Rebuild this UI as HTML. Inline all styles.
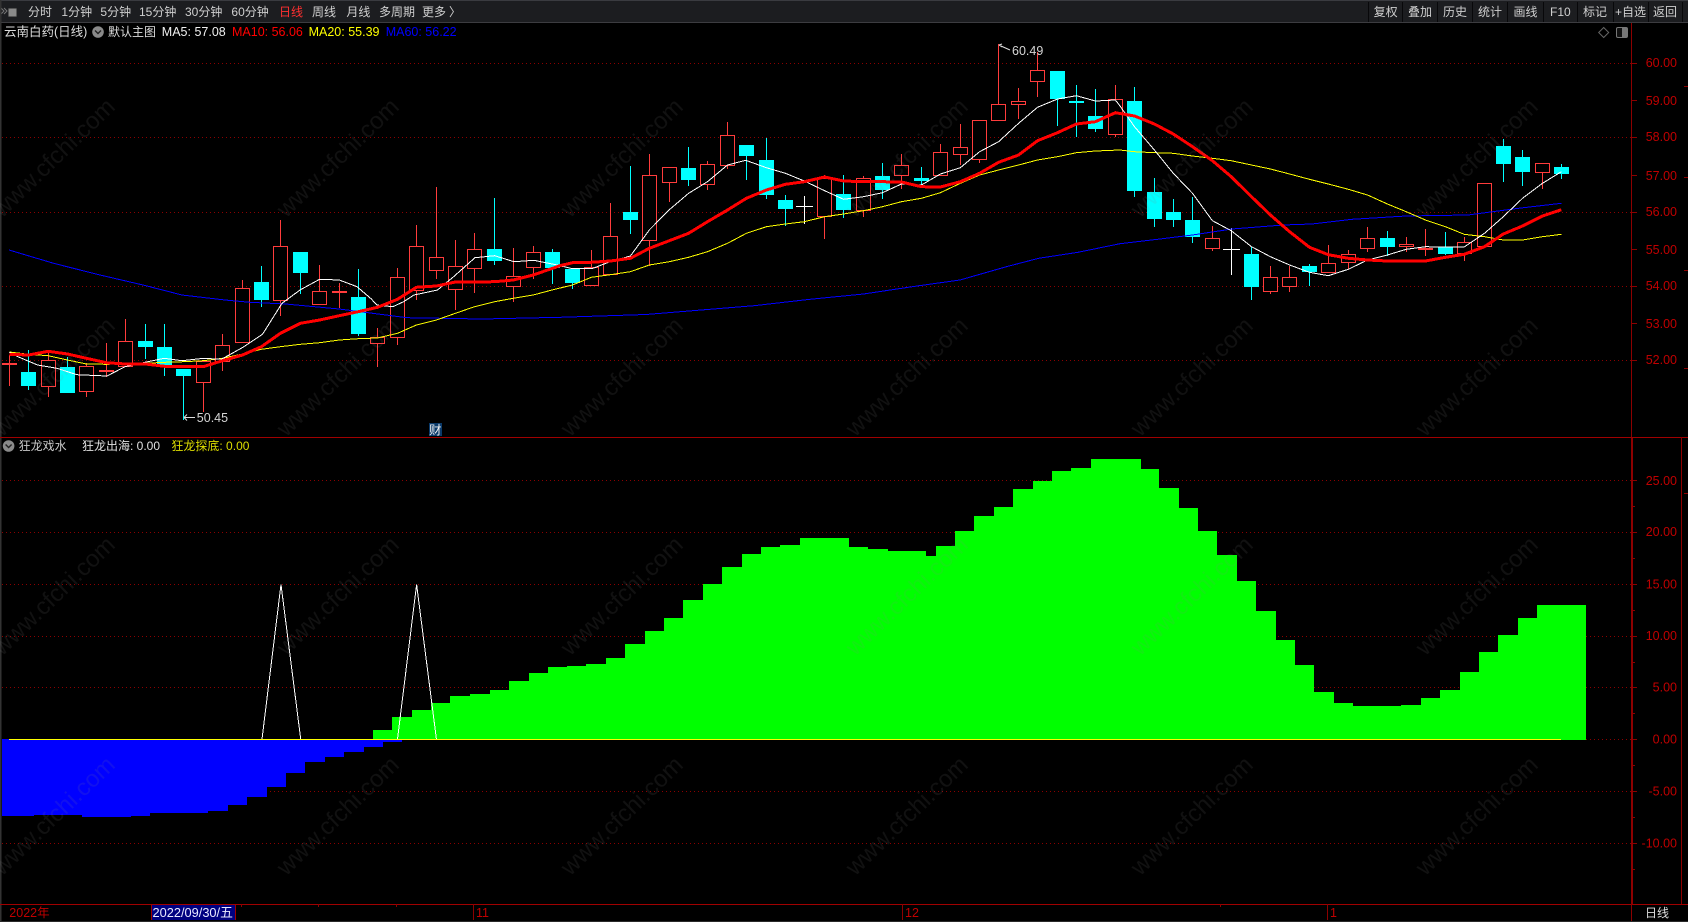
<!DOCTYPE html>
<html><head><meta charset="utf-8"><title>云南白药</title>
<style>
html,body{margin:0;padding:0;background:#000;width:1688px;height:922px;overflow:hidden}
svg{display:block;position:absolute;left:0;top:0}
text{font-family:"Liberation Sans","Noto Sans CJK SC",sans-serif;dominant-baseline:auto}
.t{font-size:12px;fill:#cfcfcf}
.a{font-size:12.5px;fill:#c00000;text-anchor:end}
.l{font-size:12.5px}
.wm{font-size:24px;fill:#808080;fill-opacity:.13;text-anchor:middle}
</style></head><body>
<svg width="1688" height="922" viewBox="0 0 1688 922" xmlns="http://www.w3.org/2000/svg">
<rect width="1688" height="922" fill="#000"/>
<!-- toolbar -->
<rect width="1688" height="22" fill="#1c1d20"/>
<rect width="1688" height="1" fill="#3a3b40"/>
<rect y="22" width="1688" height="1" fill="#3c3c40"/>
<path d="M1368.5 2V22M1402.5 2V22M1437.5 2V22M1472.5 2V22M1507.5 2V22M1543.5 2V22M1577.5 2V22M1613.5 2V22M1648.5 2V22M1682.5 2V22" stroke="#08080a" fill="none"/>
<g fill="none" stroke="#8a8a8a">
<rect x="8.5" y="8.5" width="8" height="8" rx="1" fill="#8a8a8a" stroke="#555"/>
<path d="M1 8l3 3-3 3M4 8l3 3-3 3" stroke="#777"/>
</g>
<g class="t">
<text class="t" x="28" y="16">分时</text>
<text class="t" x="61.4" y="16">1分钟</text>
<text class="t" x="100.4" y="16">5分钟</text>
<text class="t" x="139" y="16">15分钟</text>
<text class="t" x="185" y="16">30分钟</text>
<text class="t" x="231.4" y="16">60分钟</text>
<text class="t" x="279" y="16" style="fill:#ff3030">日线</text>
<text class="t" x="312" y="16">周线</text>
<text class="t" x="346.4" y="16">月线</text>
<text class="t" x="379" y="16">多周期</text>
<text class="t" x="422" y="16">更多</text>
<text class="t" x="449" y="16">〉</text>
<text class="t" x="1373.6" y="16">复权</text>
<text class="t" x="1408" y="16">叠加</text>
<text class="t" x="1443" y="16">历史</text>
<text class="t" x="1478" y="16">统计</text>
<text class="t" x="1513.5" y="16">画线</text>
<text class="t" x="1550" y="16">F10</text>
<text class="t" x="1583" y="16">标记</text>
<text class="t" x="1615" y="16">+自选</text>
<text class="t" x="1653" y="16">返回</text>
</g>
<rect x="0" y="0" width="1.5" height="922" fill="#333"/>

<!-- grid -->
<path d="M2 63.5H1631M2 137.5H1631M2 212.5H1631M2 286.5H1631M2 360.5H1631M2 480.5H1631M2 532.5H1631M2 584.5H1631M2 636.5H1631M2 687.5H1631M2 739.5H1631M2 791.5H1631M2 843.5H1631" stroke="#8c0000" stroke-dasharray="1 3" fill="none"/>

<!-- lower histogram -->
<path d="M2 739V816H34V815H82V817H131V816H150V813H208V811H228V805H247V797H267V787H286V773H305V762H325V757H344V752H364V747H383V742H402V739Z" fill="#0000ff"/>
<path d="M373 739V730H392V717H412V710H431V703H450V696H470V694H490V690H509V681H529V673H548V667H567V666H586V664H606V658H625V644H645V631H664V618H683V600H703V584H722V567H742V554H761V547H780V545H800V538H849V547H868V549H888V551H926V556H936V546H955V531H974V516H994V507H1013V489H1033V481H1052V471H1071V468H1091V459H1141V469H1159V488H1179V508H1198V531H1217V555H1237V581H1256V611H1276V640H1295V665H1314V692H1334V703H1353V706H1401V705H1421V698H1440V690H1460V672H1479V652H1498V635H1518V618H1537V605H1586V740H373Z" fill="#00ff00"/>
<path d="M262 739L281 584.5L300.7 739M397.5 739L416.6 584.5L436.4 739" fill="none" stroke="#fff" stroke-width="1" shape-rendering="crispEdges"/>
<path d="M9 739.5H1561" stroke="#ffff00" stroke-width="1" fill="none" shape-rendering="crispEdges"/>

<!-- candle wicks -->
<g shape-rendering="crispEdges">
<path fill="none" stroke="#ff3c3c" d="M9.5 355V386M48.5 351V397M86.5 363V397M106.5 343V377M125.5 319V367M203.5 361V412M222.5 334V371M242.5 280V343M280.5 220V316M319.5 265V305M339.5 283V308M377.5 328V367M397.5 268V345M416.5 225V300M436.5 187V279M455.5 240V310M474.5 233V293M513.5 248V302M533.5 246V279M591.5 250V286M610.5 203V275M649.5 154V266M669.5 167V202M707.5 161V190M727.5 122V169M824.5 175V239M863.5 176V217M901.5 154V189M940.5 144V176M960.5 124V165M979.5 120V163M998.5 44V121M1018.5 88V119M1037.5 52V97M1115.5 85V137M1212.5 226V251M1270.5 266V294M1289.5 266V292M1328.5 245V273M1348.5 250V269M1367.5 227V252M1406.5 237V252M1425.5 229V256M1464.5 237V261M1484.5 183V247M1542.5 163V189"/>
<path fill="none" stroke="#00ffff" d="M28.5 350V390M67.5 357V393M145.5 324V359M164.5 324V376M183.5 369V420M261.5 266V307M300.5 252V294M358.5 269V336M494.5 198V265M552.5 249V284M572.5 269V289M630.5 166V234M688.5 147V186M746.5 145V180M766.5 138V199M785.5 195V226M843.5 175V218M882.5 163V199M921.5 167V187M1057.5 71V126M1076.5 85V137M1095.5 89V132M1134.5 87V197M1154.5 178V227M1173.5 199V227M1192.5 197V243M1251.5 247V300M1309.5 264V286M1387.5 231V256M1445.5 232V255M1503.5 139V182M1522.5 150V186M1561.5 164V179"/>
<path fill="none" stroke="#fff" d="M804.5 196V224M796 206.5H813M1231.5 228V275M1223 249.5H1240"/>
<!-- red bodies -->
<path fill="#000" stroke="#ff3c3c" d="M41.5 360.5h14V386.5h-14zM79.5 366.5h14V391.5h-14zM99.5 370.5h14V371.5h-14zM118.5 341.5h14V366.5h-14zM196.5 361.5h14V382.5h-14zM215.5 345.5h14V361.5h-14zM235.5 288.5h14V342.5h-14zM273.5 246.5h14V300.5h-14zM312.5 291.5h14V304.5h-14zM370.5 337.5h14V343.5h-14zM390.5 277.5h14V337.5h-14zM409.5 246.5h14V290.5h-14zM429.5 257.5h14V270.5h-14zM448.5 266.5h14V289.5h-14zM467.5 249.5h14V268.5h-14zM506.5 276.5h14V286.5h-14zM526.5 252.5h14V267.5h-14zM584.5 267.5h14V285.5h-14zM603.5 236.5h14V274.5h-14zM642.5 175.5h14V240.5h-14zM662.5 167.5h14V182.5h-14zM700.5 164.5h14V184.5h-14zM720.5 135.5h14V165.5h-14zM817.5 178.5h14V216.5h-14zM856.5 178.5h14V210.5h-14zM894.5 165.5h14V175.5h-14zM933.5 152.5h14V175.5h-14zM953.5 147.5h14V154.5h-14zM972.5 120.5h14V159.5h-14zM991.5 104.5h14V120.5h-14zM1011.5 101.5h14V104.5h-14zM1030.5 70.5h14V81.5h-14zM1108.5 99.5h14V134.5h-14zM1205.5 238.5h14V248.5h-14zM1263.5 277.5h14V291.5h-14zM1282.5 277.5h14V286.5h-14zM1321.5 263.5h14V272.5h-14zM1341.5 254.5h14V262.5h-14zM1360.5 238.5h14V248.5h-14zM1399.5 244.5h14V246.5h-14zM1457.5 242.5h14V253.5h-14zM1477.5 183.5h14V246.5h-14zM1535.5 163.5h14V172.5h-14z"/>
<path fill="#ff3c3c" d="M2 363h15v2H2zM332 291h15v2h-15zM1418 248h15v2h-15z"/>
<!-- cyan bodies -->
<path fill="#00ffff" d="M21 372h15V386H21zM60 367h15V393H60zM138 341h15V347h-15zM157 347h15V366h-15zM176 369h15V376h-15zM254 282h15V300h-15zM293 252h15V273h-15zM351 297h15V334h-15zM487 249h15V261h-15zM545 252h15V268h-15zM565 269h15V283h-15zM623 212h15V220h-15zM681 168h15V180h-15zM739 145h15V156h-15zM759 160h15V195h-15zM778 200h15V209h-15zM836 194h15V210h-15zM875 176h15V190h-15zM914 178h15V181h-15zM1050 71h15V99h-15zM1069 101h15V103h-15zM1088 116h15V129h-15zM1127 101h15V191h-15zM1147 192h15V219h-15zM1166 212h15V220h-15zM1185 220h15V237h-15zM1244 254h15V287h-15zM1302 266h15V272h-15zM1380 238h15V247h-15zM1438 247h15V254h-15zM1496 146h15V164h-15zM1515 157h15V172h-15zM1554 167h15V174h-15z"/>
</g>

<g shape-rendering="crispEdges">
<!-- MA60 -->
<polyline fill="none" stroke="#0000ff" stroke-width="1" points="9,250 53.6,263.3 100,275 143,285 182,295 225,300 250,302.3 285.7,304 339,309 407,317.7 482,319 560,317.3 646,314.5 754,305.7 810,299.3 863.6,294 917,286 960,280 1006.4,266.7 1038.6,258.3 1078,252.3 1120,243.7 1160,239 1192.5,235 1232,229 1283,225 1312,224 1352,219.3 1406,216 1468,215 1518.5,208.3 1561.3,203.3"/>
<!-- MA20 -->
<polyline fill="none" stroke="#ffff00" stroke-width="1" points="9.3,352 28.6,354.3 48.2,355.7 67.5,360 86.4,364 106.4,364.3 125.4,364 145.4,363.3 164.6,362.3 183.6,361.7 203.2,360.7 222.5,358.3 242.5,354 261.4,349.3 280.4,346.7 300.4,344.3 319.6,342.7 339.3,340 358.2,338.7 377.5,338 397.5,333.3 416.4,325 436.4,320 455.4,313.3 474.6,306.7 494.6,301.7 513.2,298.3 533.2,295 552,290 572.5,285 591.4,277.3 610.4,274.7 630.4,271.7 649.3,265 669.3,261.7 688.6,257.3 707.5,251.7 727.5,243.3 746.4,233.3 766.4,226.7 785.4,224 804.3,221.7 824.6,216.7 843.6,214 863.6,210.7 882.5,206.7 901.4,201.7 921.4,198.3 940.4,192.7 960.4,183.3 979.6,175 998.6,170 1018.6,165 1037.5,160 1057.5,156.7 1076.4,152.7 1095.4,151 1120,150 1134.5,151.7 1154.4,152.7 1173.3,153.3 1192.5,156 1212.4,158.3 1231.2,160.7 1251.5,165 1270.4,169 1289.6,174 1309.5,179.3 1328.3,184 1348.3,189.3 1367.5,195 1387.4,204 1406.2,211.7 1425.4,220 1445.4,226.7 1464.2,234.3 1484.5,236.7 1503.3,240 1522.5,240 1542.5,236.7 1561.3,234.3"/>
<!-- MA5 -->
<polyline fill="none" stroke="#ffffff" stroke-width="1" points="9.3,352.3 17.9,356.7 37.5,365 57,368.3 76.8,374.7 107,376 125,366.7 146.4,362 164.3,358.3 182,360.7 203.6,358.3 221.4,359.3 242.9,347.3 262.5,334.3 282,303.3 300,290 319.6,279.3 339.3,280 357,286.7 371.4,299 376.8,305 392.9,306.7 403.6,301.7 414,295 437.5,290 453.6,276.7 475,257.7 494.6,255.7 514,261.7 534,260.3 557,265 572.5,268.7 592,268.7 610,261.7 630.4,256 649.3,230 669,210 688.6,193.3 707.5,181.7 727.5,165 745.7,160.3 766.4,167.7 785.4,173.3 804.3,181 824.6,190.7 843.6,199.3 863.6,196.7 882.5,192.7 901.4,184 921.4,185 940.4,174 960.4,167.7 979.6,151.7 998.6,141.7 1018.6,123.3 1037.5,107.3 1057.5,99 1076.4,95.7 1095.4,101 1115.4,100 1120,106 1134.5,126.7 1154.4,150 1173.3,173.3 1192.5,193.3 1212.4,220.7 1231.2,230.7 1251.5,246.7 1270.4,256.7 1289.6,265 1309.5,272.3 1328.3,275.7 1348.3,269.3 1367.5,260 1387.4,255 1406.2,249.3 1425.4,246.7 1445.4,247 1464.2,247 1484.5,233.3 1503.3,216.7 1522.5,198.3 1542.5,183.3 1561.3,171.7"/>
<!-- MA10 -->
<polyline fill="none" stroke="#ff0000" stroke-width="3" stroke-linejoin="round" points="9.3,354.3 28.6,355 48.2,351.3 67.5,354 86.4,358.3 106.4,362.7 125.4,364 145.4,364 164.6,366.3 183.6,366.7 203.2,366.7 222.5,360.7 242.5,355 261.4,346.7 280.4,333.3 300.4,323.3 319.6,320 339.3,315.7 358.2,311.7 377.5,307.3 397.5,299.3 416.4,287.3 436.4,286 455.4,282 474.6,282 494.6,281.7 513.2,280 533.2,275 560,265.7 572.5,262.7 591.4,262.3 610.4,261 630.4,258.3 649.3,248.3 669.3,240.7 688.6,233.3 707.5,221.7 727.5,210 746.4,198.3 766.4,190 785.4,184.3 804.3,181.7 824.6,177 843.6,181 863.6,181.7 882.5,181.7 901.4,182 921.4,186.7 940.4,187 960.4,181.7 979.6,173.3 998.6,162.3 1018.6,155 1037.5,140.7 1057.5,132.7 1076.4,124 1095.4,121.7 1115.4,112.7 1134.5,116 1154.4,124 1173.3,134 1192.5,146.7 1212.4,160.7 1231.2,176.7 1251.5,196.7 1270.4,215 1289.6,231.7 1309.5,247.3 1328.3,254.7 1348.3,258.3 1367.5,260 1387.4,261 1406.2,261 1425.4,261 1445.4,257.3 1464.2,254.3 1484.5,246.7 1503.3,234 1522.5,226 1542.5,216 1561.3,209.7"/>
</g>

<!-- high/low markers -->
<path d="M999 45l3-1M999 45l3 2M1001 46L1010 50" fill="none" stroke="#ddd"/>
<text class="l" x="1012" y="55" style="fill:#d5d5d5">60.49</text>
<path d="M184 417.5H195M184 417.5l3-3M184 417.5l3 3" fill="none" stroke="#ddd"/>
<text class="l" x="196.8" y="422" style="fill:#d5d5d5">50.45</text>
<rect x="429" y="423" width="13" height="13" fill="#0a3a6a"/>
<text x="429" y="434.5" style="font-size:12.5px;fill:#f0f0f0">财</text>

<!-- axes -->
<g shape-rendering="crispEdges" fill="none" stroke="#8c0000">
<path d="M1631.5 23V904" />
<path d="M1632.5 437V904" />
<path d="M0 437.5H1688" stroke="#a00000"/>
<path d="M0 904.5H1688" stroke="#a00000"/>
<path d="M1681.5 437V904"/>
<path d="M1631.5 904V921"/>
<path d="M1632 63.5h5M1632 100.5h5M1632 137.5h5M1632 175.5h5M1632 212.5h5M1632 249.5h5M1632 286.5h5M1632 323.5h5M1632 360.5h5"/>
<path d="M1684 86.5h4M1684 177.5h4M1684 270.5h4M1684 368.5h4M1684 493.5h4"/>
<path d="M1632 480.5h5M1632 506.5h3M1632 532.5h5M1632 558.5h3M1632 584.5h5M1632 610.5h3M1632 636.5h5M1632 662.5h3M1632 687.5h5M1632 713.5h3M1632 739.5h5M1632 765.5h3M1632 791.5h5M1632 817.5h3M1632 843.5h5M1632 869.5h3"/>
<path d="M241.5 904v3M318.5 904v3M396.5 904v3M473.5 904v16M902.5 904v16M1327.5 904v16M1220.5 904v3"/>
</g>
<rect y="921" width="1688" height="1" fill="#2a2a2a"/>
<g>
<text class="a" x="1677" y="67">60.00</text>
<text class="a" x="1677" y="105">59.00</text>
<text class="a" x="1677" y="141">58.00</text>
<text class="a" x="1677" y="180">57.00</text>
<text class="a" x="1677" y="216">56.00</text>
<text class="a" x="1677" y="254">55.00</text>
<text class="a" x="1677" y="290">54.00</text>
<text class="a" x="1677" y="328">53.00</text>
<text class="a" x="1677" y="364">52.00</text>
<text class="a" x="1677" y="485">25.00</text>
<text class="a" x="1677" y="536">20.00</text>
<text class="a" x="1677" y="588.5">15.00</text>
<text class="a" x="1677" y="640">10.00</text>
<text class="a" x="1677" y="691.5">5.00</text>
<text class="a" x="1677" y="743.5">0.00</text>
<text class="a" x="1677" y="795.5">-5.00</text>
<text class="a" x="1677" y="847.5">-10.00</text>
</g>

<!-- legend upper -->
<text class="l" x="4" y="36" style="fill:#dcdcdc">云南白药(日线)</text>
<circle cx="98" cy="32" r="5.8" fill="#8a8a8a"/>
<path d="M95 30.5l3 3 3-3" fill="none" stroke="#222" stroke-width="1.4"/>
<text class="t" x="108" y="36" style="fill:#dcdcdc">默认主图</text>
<text class="l" x="161.8" y="36" style="fill:#f0f0f0">MA5: 57.08</text>
<text class="l" x="232" y="36" style="fill:#ff0000">MA10: 56.06</text>
<text class="l" x="308.6" y="36" style="fill:#ffff00">MA20: 55.39</text>
<text class="l" x="385.7" y="36" style="fill:#0000ff">MA60: 56.22</text>
<path d="M1603.7 27.5l5 5-5 5-5-5z" fill="none" stroke="#666"/>
<rect x="1616.5" y="27.5" width="11" height="10" rx="1.5" fill="#111" stroke="#777"/>
<rect x="1622" y="28" width="5" height="9" fill="#777"/>

<!-- legend lower -->
<circle cx="8.6" cy="446" r="5.8" fill="#8a8a8a"/>
<path d="M5.6 444.5l3 3 3-3" fill="none" stroke="#222" stroke-width="1.4"/>
<text class="t" x="18.6" y="450" style="fill:#c8c8c8">狂龙戏水</text>
<text class="t" x="82" y="450" style="fill:#e0e0e0">狂龙出海: 0.00</text>
<text class="t" x="171.4" y="450" style="fill:#dddd00">狂龙探底: 0.00</text>

<!-- bottom -->
<text class="l" x="9.3" y="917" style="fill:#c00000">2022年</text>
<rect x="152" y="905" width="83" height="15" fill="#000080"/>
<path d="M151.5 905V920M235.5 905V920" stroke="#a00000" fill="none" shape-rendering="crispEdges"/>
<text x="152.5" y="917" style="font-size:12.8px;fill:#e8e8ff">2022/09/30/五</text>
<text class="l" x="476" y="917" style="fill:#c00000">11</text>
<text class="l" x="905" y="917" style="fill:#c00000">12</text>
<text class="l" x="1330" y="917" style="fill:#c00000">1</text>
<text class="t" x="1645" y="917" style="fill:#dcdcdc">日线</text>

<!-- watermark -->
<g>
<text class="wm" transform="rotate(-44 53 157)" x="53" y="166">www.cfchi.com</text>
<text class="wm" transform="rotate(-44 337 157)" x="337" y="166">www.cfchi.com</text>
<text class="wm" transform="rotate(-44 621 157)" x="621" y="166">www.cfchi.com</text>
<text class="wm" transform="rotate(-44 906 157)" x="906" y="166">www.cfchi.com</text>
<text class="wm" transform="rotate(-44 1191 157)" x="1191" y="166">www.cfchi.com</text>
<text class="wm" transform="rotate(-44 1476 157)" x="1476" y="166">www.cfchi.com</text>
<text class="wm" transform="rotate(-44 53 376)" x="53" y="385">www.cfchi.com</text>
<text class="wm" transform="rotate(-44 337 376)" x="337" y="385">www.cfchi.com</text>
<text class="wm" transform="rotate(-44 621 376)" x="621" y="385">www.cfchi.com</text>
<text class="wm" transform="rotate(-44 906 376)" x="906" y="385">www.cfchi.com</text>
<text class="wm" transform="rotate(-44 1191 376)" x="1191" y="385">www.cfchi.com</text>
<text class="wm" transform="rotate(-44 1476 376)" x="1476" y="385">www.cfchi.com</text>
<text class="wm" transform="rotate(-44 53 595)" x="53" y="604">www.cfchi.com</text>
<text class="wm" transform="rotate(-44 337 595)" x="337" y="604">www.cfchi.com</text>
<text class="wm" transform="rotate(-44 621 595)" x="621" y="604">www.cfchi.com</text>
<text class="wm" transform="rotate(-44 906 595)" x="906" y="604">www.cfchi.com</text>
<text class="wm" transform="rotate(-44 1191 595)" x="1191" y="604">www.cfchi.com</text>
<text class="wm" transform="rotate(-44 1476 595)" x="1476" y="604">www.cfchi.com</text>
<text class="wm" transform="rotate(-44 53 815)" x="53" y="824">www.cfchi.com</text>
<text class="wm" transform="rotate(-44 337 815)" x="337" y="824">www.cfchi.com</text>
<text class="wm" transform="rotate(-44 621 815)" x="621" y="824">www.cfchi.com</text>
<text class="wm" transform="rotate(-44 906 815)" x="906" y="824">www.cfchi.com</text>
<text class="wm" transform="rotate(-44 1191 815)" x="1191" y="824">www.cfchi.com</text>
<text class="wm" transform="rotate(-44 1476 815)" x="1476" y="824">www.cfchi.com</text>
</g>
</svg>
</body></html>
